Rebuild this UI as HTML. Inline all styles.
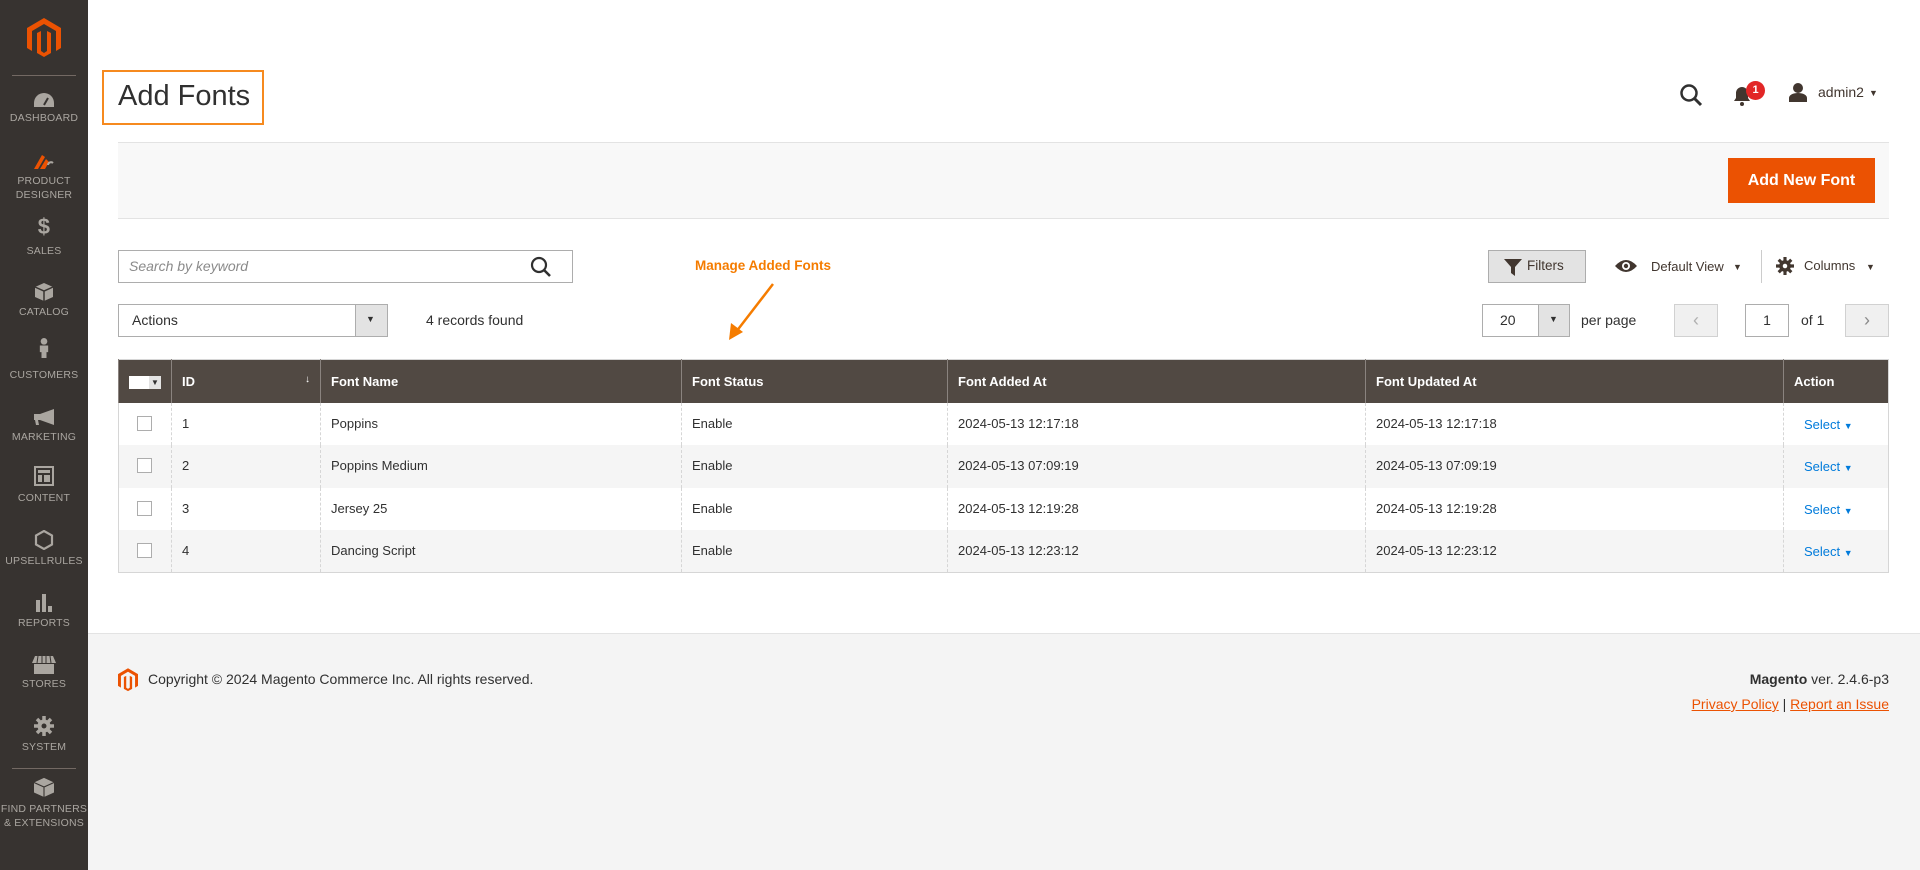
<!DOCTYPE html>
<html><head><meta charset="utf-8"><style>
*{box-sizing:border-box;margin:0;padding:0}
body{width:1920px;height:870px;overflow:hidden;font-family:"Liberation Sans",sans-serif;background:#fff;position:relative;color:#303030}
.a{position:absolute}
#side{left:0;top:0;width:88px;height:870px;background:#373330}
.lbl{position:absolute;left:0;width:88px;text-align:center;color:#aaa6a0;font-size:10.5px;line-height:14px;text-transform:uppercase;letter-spacing:.2px}
.ic{position:absolute;left:34px;width:20px;height:20px}
.sep{position:absolute;left:12px;width:64px;height:1px;background:#736963}
#foot{left:88px;top:633px;width:1832px;height:237px;background:#f4f4f4;border-top:1px solid #e3e3e3}
table{border-collapse:collapse;font-size:13px}
th{background:#514943;color:#fff;font-weight:bold;text-align:left;padding:0 10px;height:43px;border-left:1px solid #8a837f}
td{height:42.5px;padding:0 10px;border-left:1px dashed #d6d6d6;vertical-align:top;padding-top:13px;background:#fff}
tr:nth-child(odd) td{background:#f5f5f5}
.cb{display:inline-block;width:15px;height:15px;border:1px solid #adadad;background:#fff;margin-left:8px}
.sel{color:#007bdb}
.btn{border:1px solid #adadad;background:#e3e3e3}
</style></head><body>
<div id="side" class="a">
<svg class="a" style="left:27px;top:18px" width="34" height="40" viewBox="0 0 34 40"><path d="M17 0L0 10v20l5 3V13l12-7 12 7v20l5-3V10z M14 13l-4 2v20l7 4 7-4V15l-4-2v20l-3 2-3-2z" fill="#eb5202"/></svg>
<div class="sep" style="top:75px"></div>
<svg class="ic" style="top:90px;width:22px;left:33px" viewBox="0 0 22 16"><path d="M11 1A10 10 0 0 0 1 11v4h20v-4A10 10 0 0 0 11 1z" fill="#aaa6a0"/><path d="M11 13l4-7" stroke="#373330" stroke-width="2"/></svg>
<div class="lbl" style="top:111px">Dashboard</div>
<svg class="ic" style="top:151px" viewBox="0 0 20 20"><path d="M0 18L8 4l3 2-7 12zM6 18L12 8l3 3-4 7z" fill="#eb5202"/><path d="M14 14a3 3 0 0 1 5-2" stroke="#aaa6a0" stroke-width="2" fill="none"/></svg>
<div class="lbl" style="top:174px">Product</div><div class="lbl" style="top:188px">Designer</div>
<div class="lbl" style="top:220px;font-size:22px;font-weight:bold">$</div>
<div class="lbl" style="top:244px">Sales</div>
<svg class="ic" style="top:282px" viewBox="0 0 20 20"><path d="M10 1l9 4v10l-9 4-9-4V5z" fill="#aaa6a0"/><path d="M1 5l9 4 9-4M10 9v10" stroke="#373330" stroke-width="1.5" fill="none"/></svg>
<div class="lbl" style="top:305px">Catalog</div>
<svg class="ic" style="top:338px" viewBox="0 0 20 24"><circle cx="10" cy="4" r="4" fill="#aaa6a0"/><path d="M5 9h10v8h-2v7H7v-7H5z" fill="#aaa6a0"/></svg>
<div class="lbl" style="top:368px">Customers</div>
<svg class="ic" style="top:407px;width:24px;left:32px" viewBox="0 0 24 18"><path d="M2 6h6l14-5v16L8 12H6l1 5H4l-1-5H2z" fill="#aaa6a0"/></svg>
<div class="lbl" style="top:430px">Marketing</div>
<svg class="ic" style="top:466px" viewBox="0 0 20 20"><rect x="1" y="1" width="18" height="18" fill="none" stroke="#aaa6a0" stroke-width="2"/><rect x="4" y="4" width="12" height="3" fill="#aaa6a0"/><rect x="4" y="9" width="4" height="7" fill="#aaa6a0"/><rect x="10" y="9" width="6" height="7" fill="#aaa6a0"/></svg>
<div class="lbl" style="top:491px">Content</div>
<svg class="ic" style="top:530px" viewBox="0 0 20 20"><path d="M10 1l8 4.5v9L10 19l-8-4.5v-9z" fill="none" stroke="#aaa6a0" stroke-width="2.2"/></svg>
<div class="lbl" style="top:554px">Upsellrules</div>
<svg class="ic" style="top:592px" viewBox="0 0 20 20"><rect x="2" y="8" width="4" height="12" fill="#aaa6a0"/><rect x="8" y="2" width="4" height="18" fill="#aaa6a0"/><rect x="14" y="14" width="4" height="6" fill="#aaa6a0"/></svg>
<div class="lbl" style="top:616px">Reports</div>
<svg class="ic" style="top:655px;width:24px;left:32px" viewBox="0 0 24 20"><path d="M3 1h18l3 7H0z" fill="#aaa6a0"/><path d="M2 9h20v10H2z" fill="#aaa6a0"/><path d="M6 1l-1 7M10 1v7M14 1v7M18 1l1 7" stroke="#373330"/></svg>
<div class="lbl" style="top:677px">Stores</div>
<svg class="ic" style="top:716px" viewBox="0 0 20 20"><circle cx="10" cy="10" r="6.5" fill="#aaa6a0"/><path d="M10 0v20M0 10h20M3 3l14 14M17 3L3 17" stroke="#aaa6a0" stroke-width="3.5"/><circle cx="10" cy="10" r="2.5" fill="#373330"/></svg>
<div class="lbl" style="top:740px">System</div>
<div class="sep" style="top:768px"></div>
<svg class="ic" style="top:777px;width:24px;left:32px" viewBox="0 0 24 22"><path d="M12 1l11 5v11l-11 5L1 17V6z" fill="#aaa6a0"/><path d="M1 6l11 5 11-5M12 11v11" stroke="#373330" stroke-width="1.2" fill="none"/></svg>
<div class="lbl" style="top:802px">Find Partners</div><div class="lbl" style="top:816px">&amp; Extensions</div>
</div>

<div class="a" style="left:102px;top:70px;width:162px;height:55px;border:2px solid #f68a1f"></div>
<div class="a" style="left:118px;top:80px;font-size:29px;color:#303030">Add Fonts</div>

<svg class="a" style="left:1679px;top:83px" width="24" height="24" viewBox="0 0 24 24"><circle cx="10" cy="10" r="7.5" fill="none" stroke="#303030" stroke-width="2.5"/><path d="M15.5 15.5L22 22" stroke="#303030" stroke-width="3"/></svg>
<svg class="a" style="left:1732px;top:86px" width="20" height="20" viewBox="0 0 20 20"><path d="M10 1a6 6 0 0 1 6 6v5l2 3H2l2-3V7a6 6 0 0 1 6-6z" fill="#41362f"/><circle cx="10" cy="18" r="2" fill="#41362f"/></svg>
<div class="a" style="left:1746px;top:81px;width:19px;height:19px;border-radius:50%;background:#e22626;color:#fff;font-size:11px;font-weight:bold;text-align:center;line-height:19px">1</div>
<svg class="a" style="left:1788px;top:82px" width="20" height="20" viewBox="0 0 20 20"><circle cx="10" cy="6" r="5" fill="#41362f"/><path d="M1 20v-4c0-3 4-5 9-5s9 2 9 5v4z" fill="#41362f"/></svg>
<div class="a" style="left:1818px;top:84px;font-size:14px;color:#41362f">admin2</div>
<div class="a" style="left:1869px;top:88px;font-size:9px;color:#41362f">▼</div>

<div class="a" style="left:118px;top:142px;width:1771px;height:77px;background:#f8f8f8;border-top:1px solid #e3e3e3;border-bottom:1px solid #e3e3e3"></div>
<div class="a" style="left:1728px;top:158px;width:147px;height:45px;background:#eb5202;color:#fff;font-size:16px;font-weight:bold;text-align:center;line-height:45px">Add New Font</div>

<div class="a" style="left:118px;top:250px;width:455px;height:33px;border:1px solid #adadad"></div>
<div class="a" style="left:129px;top:258px;font-size:14px;color:#8a8a8a;font-style:italic">Search by keyword</div>
<svg class="a" style="left:530px;top:256px" width="22" height="22" viewBox="0 0 22 22"><circle cx="9" cy="9" r="7" fill="none" stroke="#303030" stroke-width="2.2"/><path d="M14 14l6 6" stroke="#303030" stroke-width="2.6"/></svg>

<div class="a" style="left:695px;top:258px;font-size:13.5px;font-weight:bold;color:#f57c00">Manage Added Fonts</div>
<svg class="a" style="left:720px;top:282px" width="60" height="62"><path d="M53 2L16 50" stroke="#f57c00" stroke-width="2.5"/><path d="M9 58l2-17 12 9z" fill="#f57c00"/></svg>

<div class="a" style="left:118px;top:304px;width:270px;height:33px;border:1px solid #adadad"></div>
<div class="a" style="left:355px;top:305px;width:32px;height:31px;background:#e3e3e3;border-left:1px solid #adadad"></div>
<div class="a" style="left:366px;top:314px;font-size:9px">▼</div>
<div class="a" style="left:132px;top:312px;font-size:14px">Actions</div>
<div class="a" style="left:426px;top:312px;font-size:14px">4 records found</div>

<div class="a btn" style="left:1488px;top:250px;width:98px;height:33px"></div>
<svg class="a" style="left:1504px;top:258px" width="18" height="18" viewBox="0 0 18 18"><path d="M0 1h18l-7 8v9l-4-3V9z" fill="#41362f"/></svg>
<div class="a" style="left:1527px;top:258px;font-size:13.5px;color:#41362f">Filters</div>
<svg class="a" style="left:1615px;top:258px" width="22" height="16" viewBox="0 0 22 16"><path d="M0 8Q11-4 22 8Q11 20 0 8z" fill="#41362f"/><circle cx="11" cy="8" r="4" fill="#fff"/><circle cx="11" cy="8" r="2.2" fill="#41362f"/></svg>
<div class="a" style="left:1651px;top:259px;font-size:13px;color:#41362f">Default View</div>
<div class="a" style="left:1733px;top:262px;font-size:9px;color:#41362f">▼</div>
<div class="a" style="left:1761px;top:250px;width:1px;height:33px;background:#ccc"></div>
<svg class="a" style="left:1776px;top:257px" width="18" height="18" viewBox="0 0 20 20"><circle cx="10" cy="10" r="6.5" fill="#41362f"/><path d="M10 0v20M0 10h20M3 3l14 14M17 3L3 17" stroke="#41362f" stroke-width="3.5"/><circle cx="10" cy="10" r="2.5" fill="#fff"/></svg>
<div class="a" style="left:1804px;top:258px;font-size:13px;color:#41362f">Columns</div>
<div class="a" style="left:1866px;top:262px;font-size:9px;color:#41362f">▼</div>

<div class="a" style="left:1482px;top:304px;width:88px;height:33px;border:1px solid #adadad"></div>
<div class="a" style="left:1538px;top:305px;width:31px;height:31px;background:#e3e3e3;border-left:1px solid #adadad"></div>
<div class="a" style="left:1549px;top:314px;font-size:9px">▼</div>
<div class="a" style="left:1500px;top:312px;font-size:14px">20</div>
<div class="a" style="left:1581px;top:312px;font-size:14px">per page</div>
<div class="a" style="left:1674px;top:304px;width:44px;height:33px;background:#f0f0f0;border:1px solid #d1d1d1;color:#b0b0b0;text-align:center;line-height:31px;font-size:18px">‹</div>
<div class="a" style="left:1745px;top:304px;width:44px;height:33px;border:1px solid #adadad;text-align:center;line-height:31px;font-size:14px">1</div>
<div class="a" style="left:1801px;top:312px;font-size:14px">of 1</div>
<div class="a" style="left:1845px;top:304px;width:44px;height:33px;background:#f0f0f0;border:1px solid #d1d1d1;color:#8a8a8a;text-align:center;line-height:31px;font-size:18px">›</div>

<table class="a" style="left:118px;top:359px;width:1771px;border:1px solid #d6d6d6">
<tr><th style="width:53px;padding:0 10px"><span style="display:inline-block;width:20px;height:13px;background:#fff;vertical-align:middle"></span><span style="display:inline-block;width:12px;height:13px;background:#e3e3e3;vertical-align:middle;font-size:8px;color:#303030;text-align:center;line-height:13px">▼</span></th><th style="width:149px">ID<span style="float:right;font-weight:normal;font-size:10px">↓</span></th><th style="width:361px">Font Name</th><th style="width:266px">Font Status</th><th style="width:418px">Font Added At</th><th style="width:418px">Font Updated At</th><th>Action</th></tr>
<tr><td style="border-left:0"><span class="cb"></span></td><td>1</td><td>Poppins</td><td>Enable</td><td>2024-05-13 12:17:18</td><td>2024-05-13 12:17:18</td><td class="sel" style="padding-left:20px;padding-top:14px">Select <span style="font-size:9px">▼</span></td></tr>
<tr><td style="border-left:0"><span class="cb"></span></td><td>2</td><td>Poppins Medium</td><td>Enable</td><td>2024-05-13 07:09:19</td><td>2024-05-13 07:09:19</td><td class="sel" style="padding-left:20px;padding-top:14px">Select <span style="font-size:9px">▼</span></td></tr>
<tr><td style="border-left:0"><span class="cb"></span></td><td>3</td><td>Jersey 25</td><td>Enable</td><td>2024-05-13 12:19:28</td><td>2024-05-13 12:19:28</td><td class="sel" style="padding-left:20px;padding-top:14px">Select <span style="font-size:9px">▼</span></td></tr>
<tr><td style="border-left:0"><span class="cb"></span></td><td>4</td><td>Dancing Script</td><td>Enable</td><td>2024-05-13 12:23:12</td><td>2024-05-13 12:23:12</td><td class="sel" style="padding-left:20px;padding-top:14px">Select <span style="font-size:9px">▼</span></td></tr>
</table>

<div id="foot" class="a"></div>
<svg class="a" style="left:118px;top:668px" width="20" height="24" viewBox="0 0 34 40"><path d="M17 0L0 10v20l5 3V13l12-7 12 7v20l5-3V10z M14 13l-4 2v20l7 4 7-4V15l-4-2v20l-3 2-3-2z" fill="#eb5202"/></svg>
<div class="a" style="left:148px;top:671px;font-size:14px;color:#303030">Copyright © 2024 Magento Commerce Inc. All rights reserved.</div>
<div class="a" style="right:31px;top:671px;font-size:14px;color:#303030"><b>Magento</b> ver. 2.4.6-p3</div>
<div class="a" style="right:31px;top:696px;font-size:14px;color:#303030"><span style="color:#eb5202;text-decoration:underline">Privacy Policy</span> | <span style="color:#eb5202;text-decoration:underline">Report an Issue</span></div>
</body></html>
